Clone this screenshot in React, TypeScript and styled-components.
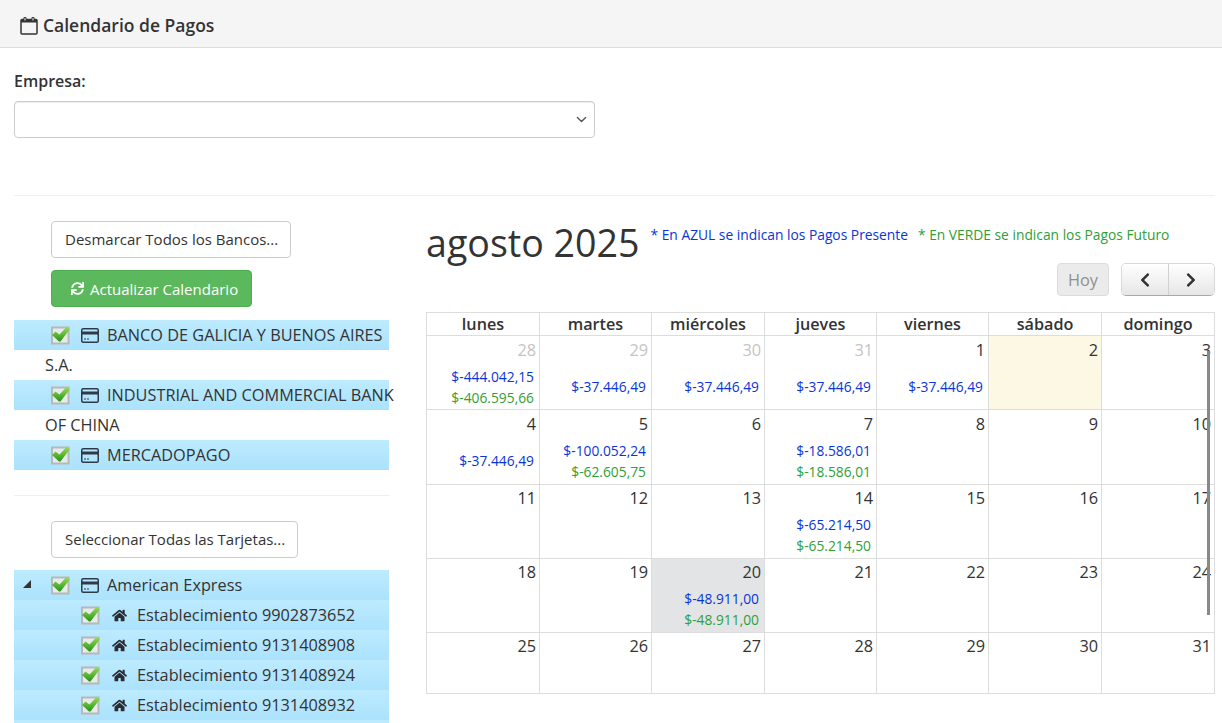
import React from 'react';
import styled, { createGlobalStyle } from 'styled-components';
import { FaSync, FaHome, FaChevronLeft, FaChevronRight } from 'react-icons/fa';

const GlobalStyle = createGlobalStyle`
  html, body {
    margin: 0;
    height: 100%;
    overflow: hidden;
    background: #fff;
  }
  body {
    font-family: "Open Sans", "Liberation Sans", sans-serif;
    font-size: 15px;
    color: #333;
  }
  * {
    box-sizing: border-box;
  }
`;

const Page = styled.div`
  width: 1222px;
  height: 723px;
  overflow: hidden;
  position: relative;
`;

const Header = styled.header`
  height: 48px;
  display: flex;
  align-items: center;
  gap: 5px;
  padding: 3px 0 0 20px;
  background: #f5f5f5;
  border-bottom: 1px solid #ddd;
  font-size: 17.5px;
  font-weight: 600;
`;

const Body = styled.div`
  padding: 0 7px 0 14px;
`;

const FieldLabel = styled.label`
  display: block;
  margin-top: 22px;
  height: 22px;
  line-height: 22px;
  font-size: 16px;
  font-weight: 600;
`;

const SelectBox = styled.div`
  width: 581px;
  height: 37px;
  margin-top: 9px;
  display: flex;
  align-items: center;
  justify-content: flex-end;
  padding-right: 7px;
  border: 1px solid #ccc;
  border-radius: 4px;
  box-shadow: inset 0 1px 1px rgba(0, 0, 0, 0.075);
`;

const Rule = styled.hr`
  margin: 0;
  border: 0;
  border-top: 1px solid #eee;
`;

const TopRule = styled(Rule)`
  margin-top: 57px;
`;

const Columns = styled.div`
  display: flex;
  gap: 37px;
`;

const LeftColumn = styled.aside`
  width: 375px;
  flex: none;
  padding-top: 25px;
`;

const ButtonStack = styled.div`
  display: flex;
  flex-direction: column;
  align-items: flex-start;
  gap: 12px;
  padding-left: 37px;
`;

const Button = styled.button<{ $success?: boolean }>`
  height: 37px;
  display: flex;
  align-items: center;
  gap: 6px;
  padding: 0 ${(p) => (p.$success ? 13 : 12)}px ${(p) => (p.$success ? 0 : 2)}px ${(p) => (p.$success ? 19 : 13)}px;
  border: 1px solid ${(p) => (p.$success ? '#4cae4c' : '#ccc')};
  border-radius: 4px;
  background: ${(p) => (p.$success ? '#5cb85c' : '#fff')};
  color: ${(p) => (p.$success ? '#fff' : '#333')};
  font: inherit;
`;

const Tree = styled.ul<{ $gap: number }>`
  list-style: none;
  margin: ${(p) => p.$gap}px 0 0;
  padding: 0;
`;

const NodeRow = styled.li<{ $child?: boolean }>`
  min-height: 30px;
  padding-left: ${(p) => (p.$child ? 67 : 37)}px;
  line-height: 30px;
  font-size: 16.3px;
  background: linear-gradient(to bottom, #bdebff, #abe2fd) no-repeat;
  background-size: 100% 30px;
`;

const NodeText = styled.div`
  width: 352px;
  margin-left: -6px;
  text-indent: 6px;
`;

const Expander = styled.span`
  float: left;
  width: 0;
  height: 0;
  margin: 10px 0 0 -28px;
  border-style: solid;
  border-width: 0 0 8px 8px;
  border-color: transparent transparent #333 transparent;
`;

const IconSlot = styled.span<{ $wide?: boolean }>`
  display: inline-flex;
  align-items: center;
  vertical-align: middle;
  width: ${(p) => (p.$wide ? 30 : 26)}px;
  height: 20px;
  margin-top: -3px;
  text-indent: 0;
`;

const HomeIcon = styled(FaHome)`
  margin-left: 1px;
  color: #2b2b33;
`;

const LowerRule = styled(Rule)`
  margin-top: 25px;
`;

const LowerButtons = styled(ButtonStack)`
  margin-top: 25px;
`;

const Main = styled.main`
  flex: 1;
  position: relative;
`;

const TitleRow = styled.div`
  display: flex;
  align-items: flex-start;
  margin-top: 19px;
  height: 48px;
`;

const MonthTitle = styled.h2`
  margin: 1px 0 0;
  font-size: 37.6px;
  font-weight: 400;
  line-height: 54px;
  white-space: nowrap;
`;

const Legend = styled.span<{ $color: string; $gap: number }>`
  margin: 10px 0 0 ${(p) => p.$gap}px;
  color: ${(p) => p.$color};
  font-size: 13.8px;
  line-height: 19px;
  white-space: nowrap;
`;

const Toolbar = styled.div`
  display: flex;
  justify-content: flex-end;
  gap: 12px;
  height: 33px;
`;

const TodayButton = styled.button`
  width: 52px;
  height: 33px;
  padding: 0;
  border: 1px solid #dcdcdc;
  border-radius: 4px;
  background: #ebebeb;
  color: #8f8f8f;
  font: inherit;
  font-size: 16.3px;
`;

const NavGroup = styled.div`
  display: flex;
  width: 94px;
  height: 33px;
  border: 1px solid #d8d8d8;
  border-bottom-color: #a8a8a8;
  border-radius: 5px;
  overflow: hidden;
`;

const NavButton = styled.button<{ $first?: boolean }>`
  flex: 1;
  display: flex;
  align-items: center;
  justify-content: center;
  padding: 0;
  border: 0;
  border-right: ${(p) => (p.$first ? '1px solid #d0d0d0' : '0')};
  background: linear-gradient(to bottom, #fff, #e6e6e6);
  color: #333;
`;

const Calendar = styled.div`
  margin-top: 16px;
  width: 789px;
  border: 1px solid #ddd;
`;

const COLUMNS = '113px 112px 113px 112px 112px 113px 1fr';

const WeekHead = styled.div`
  display: grid;
  grid-template-columns: ${COLUMNS};
  height: 23px;
  border-bottom: 1px solid #ddd;
`;

const HeadCell = styled.div`
  text-align: center;
  font-size: 16.2px;
  font-weight: 600;
  line-height: 22px;
  border-right: 1px solid #ddd;

  &:last-child {
    border-right: 0;
  }
`;

const Week = styled.div<{ $height: number }>`
  display: grid;
  grid-template-columns: ${COLUMNS};
  height: ${(p) => p.$height}px;
  border-bottom: 1px solid #ddd;

  &:last-child {
    border-bottom: 0;
  }
`;

const DayCell = styled.div<{ $tone?: 'today' | 'selected'; $inset: number }>`
  padding: ${(p) => p.$inset}px 3px 0 0;
  text-align: right;
  border-right: 1px solid #ddd;
  background: ${(p) =>
    p.$tone === 'today' ? '#fcf8e3' : p.$tone === 'selected' ? '#e3e4e6' : 'transparent'};

  &:last-child {
    border-right: 0;
  }
`;

const DayNumber = styled.div<{ $muted?: boolean }>`
  height: 24px;
  font-size: 16.3px;
  line-height: 24px;
  color: ${(p) => (p.$muted ? '#c4c4c4' : '#333')};
`;

const Amounts = styled.div`
  height: 43px;
  margin-top: 3px;
  padding-right: 2px;
  display: flex;
  flex-direction: column;
  justify-content: center;
  font-size: 13.8px;
  line-height: 21px;
`;

const Amount = styled.div<{ $future?: boolean }>`
  color: ${(p) => (p.$future ? '#2fa036' : '#0a35d6')};
`;

const ScrollThumb = styled.div`
  position: absolute;
  top: 155px;
  right: 5px;
  width: 3px;
  height: 264px;
  background: #888;
`;

const CalendarIcon = () => (
  <svg width="18" height="20" viewBox="0 0 18 20" fill="none">
    <rect x="1" y="4.5" width="16" height="14.5" rx="1" stroke="#333" strokeWidth="1.5" />
    <rect x="1" y="4.5" width="16" height="3" fill="#333" />
    <rect x="3.5" y="2" width="3" height="4.5" rx="1" fill="#333" />
    <rect x="11.5" y="2" width="3" height="4.5" rx="1" fill="#333" />
    <rect x="4.5" y="3" width="1" height="2.5" fill="#f5f5f5" />
    <rect x="12.5" y="3" width="1" height="2.5" fill="#f5f5f5" />
  </svg>
);

const CheckIcon = () => (
  <svg width="20" height="19" viewBox="0 0 20 19">
    <defs>
      <linearGradient id="chk" x1="0" y1="0" x2="0" y2="1">
        <stop offset="0" stopColor="#8fe04a" />
        <stop offset="1" stopColor="#2a9020" />
      </linearGradient>
    </defs>
    <rect x="1" y="1.5" width="16.5" height="16" fill="#e6ecea" stroke="#b8b8b8" strokeWidth="2" />
    <path d="M1 9 L4.5 5.5 L8.5 8.5 L15 1.5 L19 3 L9.5 15.5 L8 15.5 Z" fill="url(#chk)" />
  </svg>
);

const CardIcon = () => (
  <svg width="18" height="15" viewBox="0 0 18 15" fill="none">
    <rect x="0.75" y="0.75" width="16.5" height="13.5" rx="1.5" stroke="#2e3a47" strokeWidth="1.5" />
    <rect x="1" y="3.5" width="16" height="3" fill="#2e3a47" />
    <rect x="3" y="10.5" width="2" height="1" fill="#2e3a47" />
    <rect x="6" y="10.5" width="2" height="1" fill="#2e3a47" />
  </svg>
);

const SelectChevron = () => (
  <svg width="11" height="11" viewBox="0 0 16 16" fill="none">
    <path d="M2 5l6 6 6-6" stroke="#555" strokeWidth="2" strokeLinecap="round" strokeLinejoin="round" />
  </svg>
);

interface IDay {
  day: number;
  muted?: boolean;
  tone?: 'today' | 'selected';
  blue?: string;
  green?: string;
}

const DAY_NAMES = ['lunes', 'martes', 'miércoles', 'jueves', 'viernes', 'sábado', 'domingo'];

const WEEKS: { height: number; inset: number; days: IDay[] }[] = [
  {
    height: 74,
    inset: 2,
    days: [
      { day: 28, muted: true, blue: '$-444.042,15', green: '$-406.595,66' },
      { day: 29, muted: true, blue: '$-37.446,49' },
      { day: 30, muted: true, blue: '$-37.446,49' },
      { day: 31, muted: true, blue: '$-37.446,49' },
      { day: 1, blue: '$-37.446,49' },
      { day: 2, tone: 'today' },
      { day: 3 },
    ],
  },
  {
    height: 75,
    inset: 2,
    days: [
      { day: 4, blue: '$-37.446,49' },
      { day: 5, blue: '$-100.052,24', green: '$-62.605,75' },
      { day: 6 },
      { day: 7, blue: '$-18.586,01', green: '$-18.586,01' },
      { day: 8 },
      { day: 9 },
      { day: 10 },
    ],
  },
  {
    height: 74,
    inset: 1,
    days: [
      { day: 11 },
      { day: 12 },
      { day: 13 },
      { day: 14, blue: '$-65.214,50', green: '$-65.214,50' },
      { day: 15 },
      { day: 16 },
      { day: 17 },
    ],
  },
  {
    height: 74,
    inset: 1,
    days: [
      { day: 18 },
      { day: 19 },
      { day: 20, tone: 'selected', blue: '$-48.911,00', green: '$-48.911,00' },
      { day: 21 },
      { day: 22 },
      { day: 23 },
      { day: 24 },
    ],
  },
  {
    height: 60,
    inset: 1,
    days: [
      { day: 25 },
      { day: 26 },
      { day: 27 },
      { day: 28 },
      { day: 29 },
      { day: 30 },
      { day: 31 },
    ],
  },
];

const BANKS = [
  'BANCO DE GALICIA Y BUENOS AIRES S.A.',
  'INDUSTRIAL AND COMMERCIAL BANK OF CHINA',
  'MERCADOPAGO',
];

const STORES = ['9902873652', '9131408908', '9131408924', '9131408932'];

const App = () => {
  return (
    <Page>
      <GlobalStyle />
      <Header>
        <CalendarIcon />
        Calendario de Pagos
      </Header>
      <Body>
        <FieldLabel>Empresa:</FieldLabel>
        <SelectBox>
          <SelectChevron />
        </SelectBox>
        <TopRule />
        <Columns>
          <LeftColumn>
            <ButtonStack>
              <Button>Desmarcar Todos los Bancos...</Button>
              <Button $success>
                <FaSync size={13} />
                Actualizar Calendario
              </Button>
            </ButtonStack>
            <Tree $gap={13}>
              {BANKS.map((bank) => (
                <NodeRow key={bank}>
                  <NodeText>
                    <IconSlot $wide>
                      <CheckIcon />
                    </IconSlot>
                    <IconSlot>
                      <CardIcon />
                    </IconSlot>
                    {bank}
                  </NodeText>
                </NodeRow>
              ))}
            </Tree>
            <LowerRule />
            <LowerButtons>
              <Button>Seleccionar Todas las Tarjetas...</Button>
            </LowerButtons>
            <Tree $gap={12}>
              <NodeRow>
                <Expander />
                <NodeText>
                  <IconSlot $wide>
                    <CheckIcon />
                  </IconSlot>
                  <IconSlot>
                    <CardIcon />
                  </IconSlot>
                  American Express
                </NodeText>
              </NodeRow>
              {STORES.map((store) => (
                <NodeRow $child key={store}>
                  <NodeText>
                    <IconSlot $wide>
                      <CheckIcon />
                    </IconSlot>
                    <IconSlot>
                      <HomeIcon size={15} />
                    </IconSlot>
                    Establecimiento {store}
                  </NodeText>
                </NodeRow>
              ))}
              <NodeRow />
            </Tree>
          </LeftColumn>
          <Main>
            <TitleRow>
              <MonthTitle>agosto 2025</MonthTitle>
              <Legend $color="#0a35d6" $gap={11}>* En AZUL se indican los Pagos Presente</Legend>
              <Legend $color="#2fa036" $gap={10}>* En VERDE se indican los Pagos Futuro</Legend>
            </TitleRow>
            <Toolbar>
              <TodayButton disabled>Hoy</TodayButton>
              <NavGroup>
                <NavButton $first>
                  <FaChevronLeft size={16} />
                </NavButton>
                <NavButton>
                  <FaChevronRight size={16} />
                </NavButton>
              </NavGroup>
            </Toolbar>
            <Calendar>
              <WeekHead>
                {DAY_NAMES.map((name) => (
                  <HeadCell key={name}>{name}</HeadCell>
                ))}
              </WeekHead>
              {WEEKS.map((week) => (
                <Week $height={week.height} key={week.days[0].day}>
                  {week.days.map((d) => (
                    <DayCell $tone={d.tone} $inset={week.inset} key={d.day}>
                      <DayNumber $muted={d.muted}>{d.day}</DayNumber>
                      {d.blue && (
                        <Amounts>
                          <Amount>{d.blue}</Amount>
                          {d.green && <Amount $future>{d.green}</Amount>}
                        </Amounts>
                      )}
                    </DayCell>
                  ))}
                </Week>
              ))}
            </Calendar>
            <ScrollThumb />
          </Main>
        </Columns>
      </Body>
    </Page>
  );
};

export default App;
